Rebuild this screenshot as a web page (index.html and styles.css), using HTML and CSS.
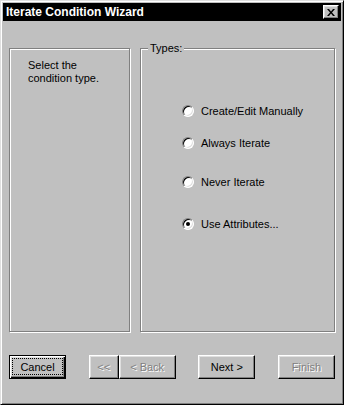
FILE: index.html
```html
<!DOCTYPE html>
<html lang="en">
<head>
  <meta charset="UTF-8">
  <title>Iterate Condition Wizard</title>
  <link rel="stylesheet" href="styles.css">
</head>
<body>
  <div class="window">
    <div class="titlebar">
      <span class="title">Iterate Condition Wizard</span>
      <button class="close-btn" aria-label="Close">
        <svg width="8" height="7" viewBox="0 0 8 7">
          <path d="M0 0h2l2 2.5L6 0h2L5 3.5 8 7H6L4 4.5 2 7H0l3-3.5z" fill="#000"/>
        </svg>
      </button>
    </div>

    <div class="content">
      <div class="panels">
        <div class="etched info-panel">
          <p>Select the<br>condition type.</p>
        </div>

        <div class="etched group">
          <span class="group-label">Types:</span>
          <div class="options">
            <label class="option">
              <span class="radio"></span>
              Create/Edit Manually
            </label>
            <label class="option">
              <span class="radio"></span>
              Always Iterate
            </label>
            <label class="option">
              <span class="radio"></span>
              Never Iterate
            </label>
            <label class="option">
              <span class="radio checked"></span>
              Use Attributes...
            </label>
          </div>
        </div>
      </div>

      <div class="buttons">
        <button class="btn btn-default"><span class="focus">Cancel</span></button>
        <div class="btn-pair">
          <button class="btn btn-small" disabled>&lt;&lt;</button>
          <button class="btn" disabled>&lt; Back</button>
        </div>
        <button class="btn">Next &gt;</button>
        <button class="btn" disabled>Finish</button>
      </div>
    </div>
  </div>
</body>
</html>
```

FILE: styles.css
```css
* {
  box-sizing: border-box;
}
body {
  margin: 0;
  font-family: 'Liberation Sans', Arial, sans-serif;
  font-size: 11px;
  color: #000;
  background-color: #c0c0c0;
}
.window {
  width: 344px;
  height: 405px;
  background-color: #c0c0c0;
  border: 1px solid;
  border-color: #dfdfdf #000 #000 #dfdfdf;
  box-shadow: inset 1px 1px #fff, inset -1px -1px #808080;
  padding: 2px;
}
.titlebar {
  height: 18px;
  background-color: #000;
  color: #fff;
  display: flex;
  align-items: center;
  justify-content: space-between;
  padding: 0 2px 0 3px;
}
.title {
  font-weight: bold;
  font-size: 12px;
}
.close-btn {
  width: 16px;
  height: 14px;
  padding: 0;
  background-color: #c0c0c0;
  border: 1px solid;
  border-color: #fff #000 #000 #fff;
  box-shadow: inset -1px -1px #808080, inset 1px 1px #dfdfdf;
  display: flex;
  align-items: center;
  justify-content: center;
}
.content {
  padding: 27px 6px 0;
}
.panels {
  display: flex;
  gap: 10px;
  height: 284px;
}
.etched {
  border: 1px solid #808080;
  box-shadow: inset 1px 1px #fff, 1px 1px #fff;
}
.info-panel {
  width: 121px;
  padding: 10px 10px 0 18px;
}
.info-panel p {
  margin: 0;
  line-height: 13px;
}
.group {
  width: 195px;
  position: relative;
}
.group-label {
  position: absolute;
  top: -7px;
  left: 7px;
  padding: 0 2px;
  line-height: 13px;
  background-color: #c0c0c0;
}
.options {
  display: grid;
  grid-template-rows: 32px 39px 42px 13px;
  padding: 55px 0 0 41px;
}
.option {
  display: flex;
  align-items: center;
  gap: 7px;
  height: 13px;
}
.radio {
  width: 12px;
  height: 12px;
  border-radius: 50%;
  background-color: #fff;
  border: 1px solid;
  border-color: #808080 #fff #fff #808080;
  box-shadow: inset 1px 1px #000, inset -1px -1px #dfdfdf;
  display: flex;
  align-items: center;
  justify-content: center;
}
.radio.checked::after {
  content: "";
  width: 4px;
  height: 4px;
  border-radius: 50%;
  background-color: #000;
}
.buttons {
  display: flex;
  justify-content: space-between;
  margin-top: 23px;
}
.btn-pair {
  display: flex;
}
.btn {
  width: 57px;
  height: 24px;
  padding: 0;
  font-family: 'Liberation Sans', Arial, sans-serif;
  font-size: 11px;
  color: #000;
  background-color: #c0c0c0;
  border: 1px solid;
  border-color: #fff #000 #000 #fff;
  box-shadow: inset -1px -1px #808080, inset 1px 1px #dfdfdf;
}
.btn-small {
  width: 30px;
}
.btn:disabled {
  color: #808080;
  text-shadow: 1px 1px #fff;
}
.btn-default {
  border: 1px solid #000;
  box-shadow: inset 1px 1px #fff, inset -1px -1px #000, inset -2px -2px #808080, inset 2px 2px #dfdfdf;
  display: flex;
}
.focus {
  flex: 1;
  margin: 2px 2px 3px;
  border: 1px dotted #000;
  display: flex;
  align-items: center;
  justify-content: center;
}
```
